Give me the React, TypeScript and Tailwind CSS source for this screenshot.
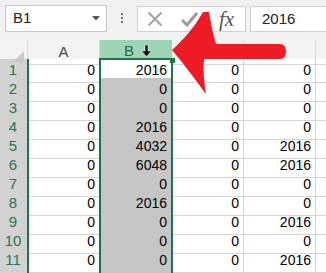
import React from 'react';

const colA = Array(11).fill('0');
const colB = ['2016', '0', '0', '2016', '4032', '6048', '0', '2016', '0', '0', '0'];
const colC = Array(11).fill('0');
const colD = ['0', '0', '0', '0', '2016', '2016', '0', '0', '2016', '0', '2016'];

function Toolbar() {
  return (
    <div className="flex h-[40px] items-start bg-[#f1f1f1] pl-[5px] pt-[5px]">
      <div className="flex h-[27px] w-[102px] items-center justify-between border border-[#c6c6c6] bg-white pl-[7px] pr-[6px] text-[15px] text-[#222]">
        <span>B1</span>
        <svg width="8" height="5" viewBox="0 0 8 5">
          <path d="M0 0h8L4 4.5z" fill="#555" />
        </svg>
      </div>
      <div className="ml-[14px] mt-[8px] flex flex-col gap-[2px]">
        <span className="h-[2px] w-[2px] bg-[#6f6f6f]" />
        <span className="h-[2px] w-[2px] bg-[#6f6f6f]" />
        <span className="h-[2px] w-[2px] bg-[#6f6f6f]" />
      </div>
      <div className="ml-[14px] mt-px flex h-[26px] w-[109px] items-center border border-[#d0d0d0] bg-white">
        <svg className="ml-[9px]" width="16" height="16" viewBox="0 0 16 16">
          <path d="M1.5 1.5l13 13M14.5 1.5l-13 13" stroke="#a3a3a3" strokeWidth="2" />
        </svg>
        <svg className="ml-[18px]" width="17" height="15" viewBox="0 0 17 15">
          <path d="M1 8l5 5L16 1" stroke="#9b9b9b" strokeWidth="3" fill="none" />
        </svg>
        <span className="ml-[21px] font-['Liberation_Serif',serif] text-[21px] italic leading-none text-[#555]">fx</span>
      </div>
      <div className="ml-[4px] mt-px flex h-[26px] flex-1 items-center border border-r-0 border-[#d0d0d0] bg-white pl-[11px] text-[15px] text-[#222]">
        2016
      </div>
    </div>
  );
}

function HeaderRow() {
  return (
    <div className="grid h-[19px] grid-cols-[28px_72px_72px_72px_72px_1fr] bg-[#f3f3f3] text-[15px] text-[#444]">
      <div className="relative border-r border-b border-[#d4d4d4]">
        <svg className="absolute right-[3px] bottom-[2px]" width="11" height="11" viewBox="0 0 11 11">
          <path d="M11 0v11H0z" fill="#c9c9c9" />
        </svg>
      </div>
      <div className="flex items-center justify-center border-r border-b border-[#d4d4d4]">A</div>
      <div className="flex items-center justify-center gap-[7px] border-b-2 border-[#217346] bg-[#9fd5b7] pl-[4px] text-[#1e6b40]">
        <span>B</span>
        <svg width="11" height="12" viewBox="0 0 11 12">
          <path d="M4 0h3v6h3.5L5.5 11.5 0.5 6H4z" fill="#000" stroke="#fff" strokeWidth="0.6" />
        </svg>
      </div>
      <div className="flex items-center justify-center border-r border-b border-[#d4d4d4]">C</div>
      <div className="flex items-center justify-center border-r border-b border-[#d4d4d4]">D</div>
      <div className="border-b border-[#d4d4d4]" />
    </div>
  );
}

function Row({ n, a, b, c, d, first }: { n: number | string; a: string; b: string; c: string; d: string; first?: boolean }) {
  const cell = 'flex items-center justify-end border-r border-b border-[#d4d4d4] pr-[4px]';
  return (
    <div className="grid h-[19px] grid-cols-[28px_72px_72px_72px_72px_1fr] text-[14px] text-black">
      <div className="flex items-center justify-center border-b border-[#e6e6e6] bg-[#d2d2d2] pr-[2px] text-[15px] text-[#2a7350]">
        {n}
      </div>
      <div className={cell}>{a}</div>
      <div className={`${cell} ${first ? 'bg-white' : 'bg-[#c6c6c6] border-b-[#d8d8d8]'}`}>{b}</div>
      <div className={cell}>{c}</div>
      <div className={cell}>{d}</div>
      <div className="border-b border-[#d4d4d4]" />
    </div>
  );
}

export default function App() {
  return (
    <div className="relative h-[273px] w-[326px] overflow-hidden bg-white font-['Liberation_Sans',Arial,sans-serif]">
      <Toolbar />
      <HeaderRow />
      {colA.map((a, i) => (
        <Row key={i} n={i + 1} a={a} b={colB[i]} c={colC[i]} d={colD[i]} first={i === 0} />
      ))}
      <Row n="" a="" b="" c="" d="" />

      {/* row header edge and column selection outline */}
      <div className="absolute left-[27px] top-[59px] bottom-0 w-[2px] bg-[#217346]" />
      <div className="absolute left-[99px] top-[58px] -bottom-[4px] w-[74px] border-2 border-[#217346]" />
      <div className="absolute left-[170px] top-[58px] h-[5px] w-[5px] bg-[#217346]" />

      <svg className="pointer-events-none absolute left-0 top-0" width="326" height="273" viewBox="0 0 326 273">
        <path
          d="M172 50 C182 41 194 28 203 12 L209 12 C211 24 213 34 216 44 L280 44 Q286 44 286 51.5 Q286 59 280 59 L204 59 C203 70 204 82 206 94 C197 82 184 64 172 50 Z"
          fill="#ec1b24"
        />
      </svg>
    </div>
  );
}
